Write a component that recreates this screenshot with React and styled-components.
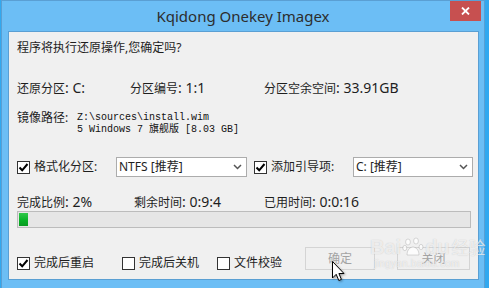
import React from "react";
import styled, { createGlobalStyle } from "styled-components";

const GlobalStyle = createGlobalStyle`
  html, body {
    margin: 0;
    padding: 0;
    background: #31a8ef;
  }
  body {
    font-family: "Noto Sans", "Noto Sans CJK SC", sans-serif;
    font-size: 12px;
    color: #1e1e1e;
  }
`;

const Screen = styled.div`
  position: relative;
  width: 489px;
  height: 288px;
  overflow: hidden;
  background: #31a8ef;
  display: flex;
  padding-left: 1px;
  box-sizing: border-box;
`;

const Window = styled.div`
  width: 484px;
  height: 288px;
  box-sizing: border-box;
  border: 1px solid #5a9fd3;
  border-bottom: none;
  background: #6cbef5;
  display: flex;
  flex-direction: column;
`;

const TitleBar = styled.div`
  position: relative;
  height: 29px;
  display: flex;
  align-items: center;
  justify-content: center;
  font-family: "Noto Sans", "Open Sans", sans-serif;
  font-size: 15px;
  color: #2d2d2d;
  padding-bottom: 1px;
`;

const CloseButton = styled.div`
  position: absolute;
  top: 0;
  right: 3px;
  width: 31px;
  height: 20px;
  background: #c75050;
  display: flex;
  align-items: center;
  justify-content: center;
`;

const Panel = styled.div`
  margin: 0 5px 0 6px;
  height: 249px;
  box-sizing: border-box;
  border: 1px solid #5a9fd3;
  background: #f0f0f0;
  padding: 0 0 0 8px;
  display: flex;
  flex-direction: column;
`;

const Message = styled.div`
  margin-top: 8px;
  height: 16px;
  line-height: 16px;
`;

const Row = styled.div`
  margin-top: ${(p) => p.$top}px;
  height: ${(p) => p.$h || 16}px;
  line-height: ${(p) => p.$h || 16}px;
  display: flex;
  align-items: ${(p) => p.$align || "center"};
`;

const Cell = styled.div`
  width: ${(p) => p.$w}px;
  flex-shrink: 0;
  white-space: nowrap;
`;

/* the values (": C:", ": 33.91GB") are drawn larger, like YaHei's latin */
const Val = styled.span`
  font-family: "Noto Sans", sans-serif;
  font-size: 14px;
`;

const PathLabel = styled.div`
  width: 60px;
  line-height: 12px;
  flex-shrink: 0;
`;

const Mono = styled.div`
  font-family: "Liberation Mono", "Noto Sans CJK SC", monospace;
  font-size: 10px;
  line-height: 12px;
  white-space: pre;
  color: #111;
`;

const CheckItem = styled.label`
  display: flex;
  align-items: center;
  width: ${(p) => p.$w}px;
  flex-shrink: 0;
  white-space: nowrap;
  line-height: 14px;
`;

const Box = styled.span`
  width: 13px;
  height: 13px;
  box-sizing: border-box;
  border: 1px solid #333;
  background: #fff;
  margin-right: 4px;
  display: flex;
  align-items: center;
  justify-content: center;
  flex-shrink: 0;
`;

const Select = styled.div`
  width: ${(p) => p.$w}px;
  height: 20px;
  box-sizing: border-box;
  border: 1px solid #acacac;
  background: #fff;
  display: flex;
  align-items: center;
  justify-content: space-between;
  padding: 0 4px 0 2px;
  line-height: 18px;
  flex-shrink: 0;
`;

const Spacer = styled.div`
  width: ${(p) => p.$w}px;
  flex-shrink: 0;
`;

const Progress = styled.div`
  margin-top: 1px;
  width: 454px;
  height: 17px;
  box-sizing: border-box;
  border: 1px solid #bcbcbc;
  background: #e6e6e6;
  padding: 1px;
  display: flex;
`;

const Fill = styled.div`
  height: 100%;
  background: linear-gradient(#30c84a, #06b025 60%, #0a9a22);
`;

const Button = styled.div`
  width: ${(p) => p.$w}px;
  height: 23px;
  box-sizing: border-box;
  border: 1px solid #d4d4d4;
  color: #a3a3a3;
  display: flex;
  align-items: center;
  justify-content: center;
  line-height: 21px;
  margin-left: ${(p) => p.$gap}px;
  flex-shrink: 0;
`;

const Watermark = styled.div`
  position: absolute;
  left: 370px;
  top: 236px;
  display: flex;
  flex-direction: column;
  color: rgba(255, 255, 255, 0.7);
  text-shadow: 0 0 1px rgba(120, 120, 120, 0.4);
  pointer-events: none;
`;

const MarkLine = styled.div`
  display: flex;
  align-items: flex-end;
  font-family: "Liberation Sans", "Noto Sans CJK SC", sans-serif;
  font-size: 20px;
  font-weight: bold;
  line-height: 22px;
`;

const MarkCjk = styled.span`
  font-family: "Noto Sans CJK SC", sans-serif;
  font-size: 17px;
  font-weight: normal;
  margin-left: 2px;
`;

const MarkSmall = styled.div`
  font-family: "Liberation Sans", sans-serif;
  font-size: 10px;
  line-height: 12px;
  margin-left: 4px;
  letter-spacing: 0.3px;
`;

const Cursor = styled.svg`
  position: absolute;
  left: 332px;
  top: 261px;
  filter: drop-shadow(1px 1px 1px rgba(0, 0, 0, 0.35));
`;

const Check = () => (
  <svg width="11" height="11" viewBox="0 0 11 11">
    <path d="M1.5 5.5 L4.2 8.3 L9.5 2" fill="none" stroke="#000" strokeWidth="2" />
  </svg>
);

const CheckBox = ({ checked, label, w }) => (
  <CheckItem $w={w}>
    <Box>{checked && <Check />}</Box>
    {label}
  </CheckItem>
);

const Chevron = () => (
  <svg width="9" height="6" viewBox="0 0 9 6">
    <path d="M1 1 L4.5 4.5 L8 1" fill="none" stroke="#555" strokeWidth="1.5" />
  </svg>
);

export default function App() {
  return (
    <>
      <GlobalStyle />
      <Screen>
        <Window>
          <TitleBar>
            Kqidong Onekey Imagex
            <CloseButton>
              <svg width="9" height="8" viewBox="0 0 9 8">
                <path d="M1 0.5 L8 7.5 M8 0.5 L1 7.5" stroke="#fff" strokeWidth="1.8" />
              </svg>
            </CloseButton>
          </TitleBar>
          <Panel>
            <Message>程序将执行还原操作,您确定吗?</Message>

            <Row $top={24}>
              <Cell $w={113}>还原分区<Val>: C:</Val></Cell>
              <Cell $w={134}>分区编号<Val>: 1:1</Val></Cell>
              <Cell $w={150}>分区空余空间<Val>: 33.91GB</Val></Cell>
            </Row>

            <Row $top={16} $h={24} $align="flex-start">
              <PathLabel>镜像路径:</PathLabel>
              <div>
                <Mono>Z:\sources\install.wim</Mono>
                <Mono>5 Windows 7 旗舰版 [8.03 GB]</Mono>
              </div>
            </Row>

            <Row $top={21} $h={20}>
              <CheckBox checked label="格式化分区:" w={99} />
              <Select $w={131}>
                NTFS [推荐]
                <Chevron />
              </Select>
              <Spacer $w={7} />
              <CheckBox checked label="添加引导项:" w={99} />
              <Select $w={120}>
                C: [推荐]
                <Chevron />
              </Select>
            </Row>

            <Row $top={17}>
              <Cell $w={117}>完成比例<Val>: 2%</Val></Cell>
              <Cell $w={130}>剩余时间<Val>: 0:9:4</Val></Cell>
              <Cell $w={120}>已用时间<Val>: 0:0:16</Val></Cell>
            </Row>

            <Progress>
              <Fill style={{ width: `${2 * 4.5}px` }} />
            </Progress>

            <Row $top={19} $h={23} $align="flex-end">
              <CheckBox checked label="完成后重启" w={105} />
              <CheckBox label="完成后关机" w={95} />
              <CheckBox label="文件校验" w={88} />
              <Button $w={70} $gap={0}>确定</Button>
              <Button $w={73} $gap={22}>关闭</Button>
            </Row>
          </Panel>
        </Window>

        <Watermark>
          <MarkLine>
            Bai
            <svg width="22" height="22" viewBox="0 0 22 22" style={{ margin: "0 1px" }}>
              <g fill="rgba(255,255,255,0.8)" stroke="rgba(140,140,140,0.4)" strokeWidth="0.8">
                <ellipse cx="6" cy="6" rx="2.4" ry="3" />
                <ellipse cx="14" cy="5" rx="2.4" ry="3" />
                <ellipse cx="2.8" cy="12" rx="2" ry="2.6" />
                <ellipse cx="19" cy="11" rx="2" ry="2.6" />
                <path d="M5 19 C5 13 9 11 11 11 C13 11 17 13 17 19 Z" />
              </g>
            </svg>
            du
            <MarkCjk>经验</MarkCjk>
          </MarkLine>
          <MarkSmall>jingyan.baidu.com</MarkSmall>
        </Watermark>

        <Cursor width="14" height="22" viewBox="0 0 14 22">
          <path
            d="M0.5 0.5 L0.5 17 L4.2 13.3 L6.8 19.5 L9.4 18.4 L6.9 12.5 L12 12.5 Z"
            fill="#fff"
            stroke="#000"
            strokeWidth="1"
            strokeLinejoin="round"
          />
        </Cursor>
      </Screen>
    </>
  );
}
